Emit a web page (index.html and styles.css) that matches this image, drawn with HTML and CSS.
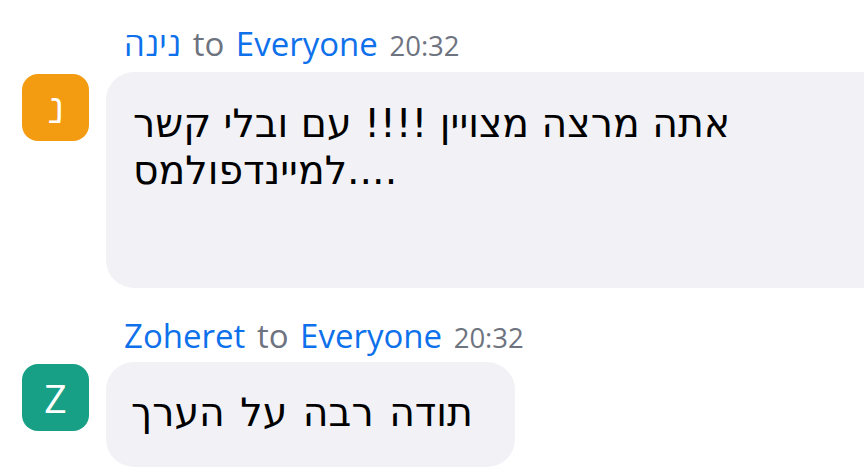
FILE: index.html
```html
<!DOCTYPE html>
<html lang="he">
<head>
<meta charset="utf-8">
<link rel="stylesheet" href="styles.css">
</head>
<body>
<div class="chat">
  <div class="msg first">
    <div class="head" dir="ltr"><span class="name">נינה</span> <span class="to">to</span> <span class="name">Everyone</span> <span class="time">20:32</span></div>
    <div class="row">
      <div class="avatar orange">נ</div>
      <div class="bubble wide" dir="ltr">אתה מרצה מצויין !!!! עם ובלי קשר למיינדפולמס....</div>
    </div>
  </div>
  <div class="msg second">
    <div class="head" dir="ltr"><span class="name">Zoheret</span> <span class="to">to</span> <span class="name">Everyone</span> <span class="time">20:32</span></div>
    <div class="row">
      <div class="avatar green">Z</div>
      <div class="bubble short" dir="ltr">תודה רבה על הערך</div>
    </div>
  </div>
</div>
</body>
</html>
```
FILE: styles.css
```css
html, body {
  margin: 0;
  padding: 0;
  background: #ffffff;
  overflow: hidden;
}
body {
  width: 864px;
  height: 475px;
  font-family: "Open Sans", "DejaVu Sans", sans-serif;
}
.chat {
  display: flex;
  flex-direction: column;
  padding-top: 22px;
}
.msg.second {
  margin-top: 26px;
}
.head {
  padding-left: 124px;
  font-size: 33px;
  line-height: 44px;
  height: 44px;
  word-spacing: 3px;
  white-space: nowrap;
}
.first .head { margin-bottom: 6px; }
.second .head { margin-bottom: 4px; }
.name { color: #0e71eb; }
.to, .time { color: #6e7380; }
.time { font-size: 27.5px; }
.row {
  display: flex;
  align-items: flex-start;
}
.avatar {
  flex: none;
  width: 67px;
  height: 67px;
  margin-left: 22px;
  margin-top: 2px;
  border-radius: 16px;
  color: #ffffff;
  font-size: 39px;
  line-height: 1;
  display: flex;
  align-items: center;
  justify-content: center;
}
.orange { background: #f39c12; }
.green { background: #17a085; }
.bubble {
  flex: none;
  margin-left: 17px;
  background: #f1f1f6;
  border-radius: 28px;
  color: #000000;
  font-family: "DejaVu Sans", "Open Sans", sans-serif;
  font-size: 39.4px;
  line-height: 47px;
  box-sizing: border-box;
  text-align: left;
}
.bubble.wide {
  width: 800px;
  height: 216px;
  padding: 28px 153px 0 27px;
}
.bubble.short {
  height: 105px;
  padding: 27px 42px 0 25px;
  word-spacing: 3px;
}
```
